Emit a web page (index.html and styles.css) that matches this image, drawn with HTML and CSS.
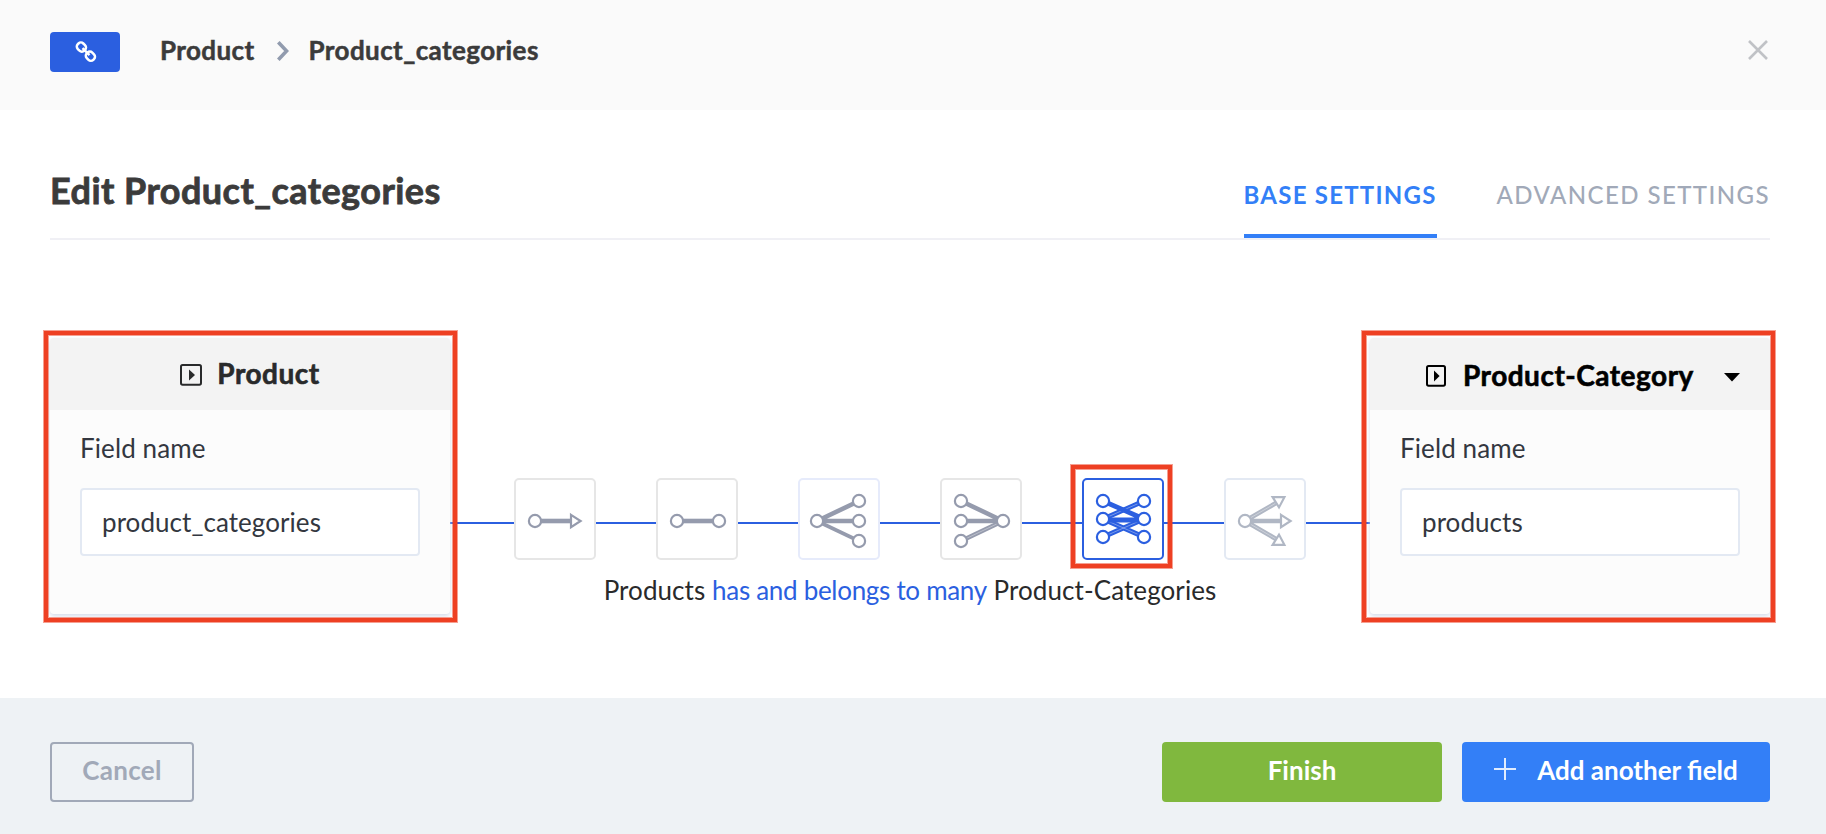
FILE: index.html
```html
<!DOCTYPE html>
<html lang="en">
<head>
<meta charset="utf-8">
<title>Edit Product_categories</title>
<link rel="stylesheet" href="styles.css">
</head>
<body>
<div class="modal">
  <header class="modal-header">
    <span class="badge">
      <svg width="22" height="22" viewBox="0 0 22 22" fill="none" stroke="#fff" stroke-width="2.5">
        <rect x="1.8" y="2.2" width="9.2" height="7.8" rx="3.4" transform="rotate(45 6.4 6.1)"/>
        <rect x="10.8" y="11.3" width="9.2" height="7.8" rx="3.4" transform="rotate(45 15.4 15.2)"/>
        <path d="M7.5 7.2l7 7"/>
      </svg>
    </span>
    <nav class="breadcrumb">
      <span>Product</span>
      <svg class="chevron" width="12" height="20" viewBox="0 0 12 20" fill="none" stroke="#919bae" stroke-width="3.6"><path d="M1.3 1.3L9.6 10L1.3 18.7"/></svg>
      <span>Product_categories</span>
    </nav>
    <svg class="close" width="20" height="20" viewBox="0 0 20 20" fill="none" stroke="#c0c2c6" stroke-width="2.6"><path d="M1 1L19 19M19 1L1 19"/></svg>
  </header>

  <main class="modal-body">
    <div class="title-row">
      <h1>Edit Product_categories</h1>
      <div class="tabs">
        <span class="tab active">BASE SETTINGS</span>
        <span class="tab">ADVANCED SETTINGS</span>
      </div>
    </div>

    <div class="relation">
      <section class="card">
        <div class="card-head">
          <svg width="22" height="22" viewBox="0 0 22 22"><rect x="1" y="1.1" width="20" height="19.6" rx="1.6" fill="none" stroke="#292a2b" stroke-width="2"/><path d="M9 5.6L15 11L9 16.4Z" fill="#292a2b"/></svg>
          <span>Product</span>
        </div>
        <div class="card-body">
          <label>Field name</label>
          <div class="input">product_categories</div>
        </div>
        <i class="mark"></i>
      </section>

      <div class="middle">
        <div class="types">
          <div class="type">
            <svg viewBox="0 0 82 82"><path d="M27 43H57" stroke-width="4.6"/><circle cx="21" cy="43" r="6.1"/><path d="M57 36.8L66.6 43L57 49.2Z"/></svg>
          </div>
          <div class="type">
            <svg viewBox="0 0 82 82"><path d="M27 43H57" stroke-width="4.6"/><circle cx="21" cy="43" r="6.1"/><circle cx="63" cy="43" r="6.1"/></svg>
          </div>
          <div class="type soft">
            <svg viewBox="0 0 82 82"><path d="M19 43L61 23M19 43H61" stroke-width="4.6"/><path d="M19 43L61 63" stroke-width="3.6"/><circle cx="19" cy="43" r="6.1"/><circle cx="61" cy="23" r="6.1"/><circle cx="61" cy="43" r="6.1"/><circle cx="61" cy="63" r="6.1"/></svg>
          </div>
          <div class="type">
            <svg viewBox="0 0 82 82"><path d="M21 23L63 43M21 43H63" stroke-width="4.6"/><path d="M21 63L63 43" stroke-width="4.6"/><path class="core" d="M21 63L63 43"/><circle cx="63" cy="43" r="6.1"/><circle cx="21" cy="23" r="6.1"/><circle cx="21" cy="43" r="6.1"/><circle cx="21" cy="63" r="6.1"/></svg>
          </div>
          <div class="type selected">
            <svg viewBox="0 0 82 82"><path d="M21 41L62 23M21 41L62 59M21 59L62 41" stroke-width="4.8"/><path class="core" d="M21 41L62 23M21 41L62 59M21 59L62 41"/><path d="M21 23L62 41M21 42H62" stroke-width="4.8"/><circle cx="21" cy="23" r="6.1"/><circle cx="21" cy="41" r="6.1"/><circle cx="21" cy="59" r="6.1"/><circle cx="62" cy="23" r="6.1"/><circle cx="62" cy="41" r="6.1"/><circle cx="62" cy="59" r="6.1"/></svg>
            <i class="mark"></i>
          </div>
          <div class="type soft faded">
            <svg viewBox="0 0 82 82"><path d="M21 43L52 25M21 43L52 61M21 43H57" stroke-width="4.6"/><path class="core" d="M21 43L52 25M21 43L52 61"/><circle cx="21" cy="43" r="6.1"/><path d="M48.6 19.2H60.4L55 29.4Z"/><path d="M57 36.8L66.6 43L57 49.2Z"/><path d="M48.6 66.8H60.4L55 56.6Z"/></svg>
          </div>
        </div>
        <p class="sentence">Products <span>has and belongs to many</span> Product-Categories</p>
      </div>

      <section class="card target">
        <div class="card-head">
          <svg width="20" height="22" viewBox="0 0 20 22"><rect x="1" y="1.1" width="18" height="19.6" rx="1.6" fill="none" stroke="#000" stroke-width="2"/><path d="M8 5.6L13.6 11L8 16.4Z" fill="#000"/></svg>
          <span>Product-Category</span>
          <svg class="caret" width="16" height="9" viewBox="0 0 16 9"><path d="M0 0H16L8 8.6Z"/></svg>
        </div>
        <div class="card-body">
          <label>Field name</label>
          <div class="input">products</div>
        </div>
        <i class="mark"></i>
      </section>
    </div>
  </main>

  <footer class="modal-footer">
    <button class="btn cancel">Cancel</button>
    <button class="btn finish">Finish</button>
    <button class="btn add"><svg width="22" height="22" viewBox="0 0 22 22" fill="none" stroke="#fff" stroke-opacity=".85" stroke-width="2"><path d="M0 11H22M11 0V22"/></svg><span>Add another field</span></button>
  </footer>
</div>
</body>
</html>
```
FILE: styles.css
```css
* { box-sizing: border-box; }
body { margin: 0; font-family: Lato, sans-serif; color: #292a2b; background: #fff; }
svg { display: block; flex: none; }
.modal { display: flex; flex-direction: column; width: 1826px; height: 834px; overflow: hidden; }

.modal-header { display: flex; align-items: flex-start; height: 110px; padding: 32px 58px 0 50px; background: #fafafa; }
.badge { display: flex; align-items: center; justify-content: center; width: 70px; height: 40px; border-radius: 4px; background: #2b5fe0; padding-left: 2px; }
.breadcrumb { display: flex; align-items: center; height: 38px; margin-left: 40px; font-size: 26px; font-weight: 700; letter-spacing: .4px; -webkit-text-stroke: .5px; color: #3b3b3b; }
.breadcrumb span { padding-bottom: 2px; }
.chevron { margin: 0 20px 0 22px; }
.close { margin: 8px 0 0 auto; }

.modal-body { flex: 1; padding: 0 56px 0 50px; }
.title-row { display: flex; justify-content: space-between; height: 130px; border-bottom: 2px solid #f0f0f5; }
h1 { margin: 0; padding-top: 57px; font-size: 36px; line-height: 46px; font-weight: 700; letter-spacing: .45px; -webkit-text-stroke: .8px; color: #3b3b3b; }
.tabs { display: flex; gap: 60px; }
.tab { height: 128px; padding-top: 70px; font-size: 24px; line-height: 30px; font-weight: 500; letter-spacing: 1.43px; color: #a1a9b8; white-space: nowrap; }
.tab.active { font-weight: 700; letter-spacing: 1.23px; color: #337ff7; border-bottom: 4px solid #337ff7; }

.relation { display: flex; padding-top: 98px; }
.card { position: relative; flex: none; width: 400px; height: 276px; border-radius: 4px; background: #fcfcfc; box-shadow: 0 2px 4px #d3dbea; }
.card-head { display: flex; align-items: center; justify-content: center; gap: 15px; height: 72px; background: #f3f3f3; border-radius: 4px 4px 0 0; font-size: 28px; font-weight: 700; letter-spacing: .5px; -webkit-text-stroke: .6px; }
.card-head span { padding-bottom: 2px; }
.card-head svg { position: relative; top: 1px; }
.target .card-head { color: #000; justify-content: flex-start; padding: 3px 30px 0 56px; gap: 17px; }
.target .card-head svg { top: 0; }
.target .card-head .caret { margin-left: auto; top: 2px; }
.card-body { padding: 22px 30px 0; color: #333740; font-size: 26px; }
label { display: block; line-height: 32px; letter-spacing: .1px; }
.input { display: flex; align-items: center; height: 68px; margin-top: 24px; padding-left: 20px; border: 2px solid #e3e9f3; border-radius: 4px; background: #fff; letter-spacing: .06px; }
.mark { position: absolute; border: 4px solid #ee4023; box-shadow: 0 0 0 1px rgba(238, 64, 35, .5), inset 0 0 0 1px rgba(238, 64, 35, .5); pointer-events: none; z-index: 1; }
.card .mark { inset: -7px -7px -8px -6px; }
.target .mark { inset: -7px -5px -8px -8px; }

.middle { flex: 1; padding-top: 140px; }
.types { display: flex; justify-content: space-between; padding: 0 64px; background: linear-gradient(#2b5fe0, #2b5fe0) 0 44px / 100% 2px no-repeat; }
.type { position: relative; width: 82px; height: 82px; border: 2px solid #e6e6e6; border-radius: 5px; background: #fff; }
.type > svg { width: 82px; height: 82px; margin: -2px; fill: #fff; stroke: #959bad; stroke-width: 2.2; }
.type .core { stroke: #fff; stroke-opacity: .4; stroke-width: .9; fill: none; }
.soft { border-color: #e6ebfb; }
.selected { border-color: #2b5fe0; }
.selected > svg { stroke: #2b5fe0; }
.faded { border-color: #e3e9f3; }
.faded > svg { stroke: #b0b7c4; }
.selected .mark { inset: -15px -10px -10px -13px; }
.sentence { margin: 13px 0 0; font-size: 26px; line-height: 34px; letter-spacing: .08px; text-align: center; white-space: nowrap; }
.sentence span { letter-spacing: -.3px; color: #2b5fe0; }

.modal-footer { display: flex; align-items: flex-start; height: 136px; padding: 44px 56px 0 50px; background: #eef2f5; }
.btn { display: flex; align-items: center; justify-content: center; height: 60px; padding: 0 0 4px; border: 0; border-radius: 4px; font: 700 26px Lato, sans-serif; color: #fff; white-space: nowrap; }
.cancel { width: 144px; margin-right: auto; border: 2px solid #a1a9b8; background: transparent; color: #a1a9b8; letter-spacing: .3px; }
.finish { width: 280px; margin-right: 20px; background: #80b83e; }
.add { width: 308px; gap: 21px; background: #337ff7; }
.add svg { margin-top: -2px; }
```
